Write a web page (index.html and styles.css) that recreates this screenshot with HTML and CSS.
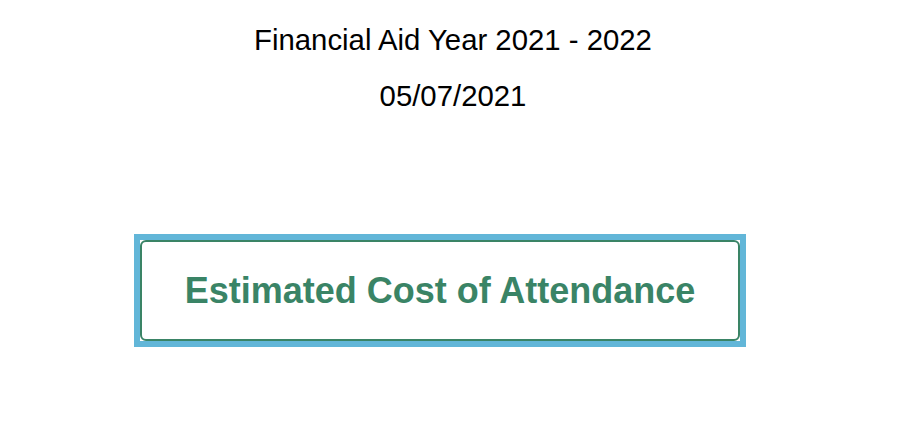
FILE: index.html
```html
<!DOCTYPE html>
<html>
<head>
<meta charset="utf-8">
<link rel="stylesheet" href="styles.css">
</head>
<body>
<div class="page">
  <p class="title">Financial Aid Year 2021 - 2022</p>
  <p class="date">05/07/2021</p>
  <div class="actions">
    <div class="focus-ring">
      <button class="coa-btn">Estimated Cost of Attendance</button>
    </div>
  </div>
</div>
</body>
</html>
```
FILE: styles.css
```css
html, body { margin: 0; padding: 0; background: #fff; }
body { font-family: "Liberation Sans", Arial, sans-serif; color: #000; }
.page { display: flex; flex-direction: column; align-items: center; }
.title { margin: 23px 0 0; font-size: 29.33px; line-height: 34px; }
.date { margin: 22px 0 0; font-size: 29.33px; line-height: 34px; }
.actions {
  margin-top: 121px;
  display: flex;
  justify-content: center;
  width: 100%;
  box-sizing: border-box;
  padding-right: 26px;
}
.focus-ring {
  border: 6px solid #62b6d8;
  background: #fff;
  display: flex;
}
.coa-btn {
  box-sizing: border-box;
  width: 600px; height: 101px;
  background: #fff;
  border: 2px solid #3a8466;
  border-radius: 6px;
  color: #3a8466;
  font-family: "Liberation Sans", Arial, sans-serif;
  font-weight: bold;
  font-size: 36px;
  padding: 0;
  margin: 0;
  outline: none;
  cursor: pointer;
}
```
